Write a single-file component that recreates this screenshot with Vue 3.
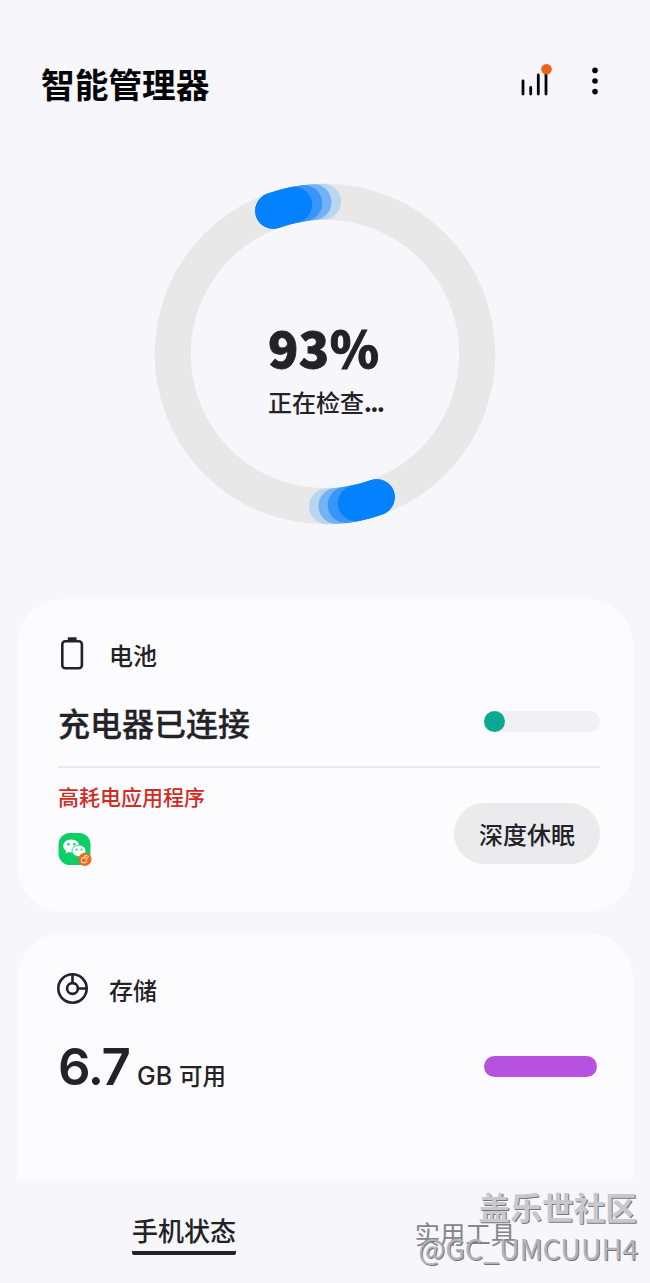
<script setup>
import { ref, computed } from 'vue';

const percent = ref(93);
const freeSpace = ref('6.7');
const activeTab = ref('status');

const tabs = [
  { id: 'status', label: '手机状态' },
  { id: 'tools', label: '实用工具' },
];

const RADIUS = 152.3;
const CENTER = 171;

// 12시 방향 기준 각도를 좌표로 변환
const pointAt = (deg) => {
  const rad = (deg * Math.PI) / 180;
  return `${(CENTER + RADIUS * Math.sin(rad)).toFixed(2)} ${(CENTER - RADIUS * Math.cos(rad)).toFixed(2)}`;
};

// 진행 표시 꼬리 (바깥쪽이 가장 옅음)
const trails = computed(() => [
  { end: -0.75, color: '#b9d6f1' },
  { end: -4.3, color: '#74b2f6' },
  { end: -7.8, color: '#3896fb' },
  { end: -11.7, color: '#0381fe' },
].map((t) => ({
  color: t.color,
  d: `M${pointAt(-19.9)} A${RADIUS} ${RADIUS} 0 0 1 ${pointAt(t.end)}`,
})));
</script>

<template>
  <div class="screen">
    <header class="header">
      <h1>智能管理器</h1>
      <div class="actions">
        <svg class="signal" width="34" height="36" viewBox="0 0 34 36">
          <g stroke="#050507" stroke-width="2.8" stroke-linecap="round">
            <path d="M4 18v13M11.700 24.500v6.500M19.300 12v19M27 10v21" />
          </g>
          <circle cx="27.500" cy="6.200" r="5.300" fill="#ec6419" />
        </svg>
        <svg class="more" width="10" height="30" viewBox="0 0 10 30" fill="#050507">
          <circle cx="5" cy="4.400" r="2.800" />
          <circle cx="5" cy="15" r="2.800" />
          <circle cx="5" cy="25.600" r="2.800" />
        </svg>
      </div>
    </header>

    <!-- 검사 진행 링 -->
    <section class="ring">
      <svg class="ring-svg" width="342" height="342" viewBox="0 0 342 342" fill="none">
        <circle cx="171" cy="171" :r="RADIUS" stroke="#e8e8e8" stroke-width="36" />
        <g stroke-width="36" stroke-linecap="round">
          <path v-for="t in trails" :key="t.color" :d="t.d" :stroke="t.color" />
        </g>
        <g stroke-width="36" stroke-linecap="round" transform="rotate(180 171 171)">
          <path v-for="t in trails" :key="t.color" :d="t.d" :stroke="t.color" />
        </g>
      </svg>
      <div class="ring-text">
        <div class="percent">{{ percent }}%</div>
        <div class="state">正在检查<span class="dots">...</span></div>
      </div>
    </section>

    <!-- 배터리 -->
    <section class="card battery">
      <div class="card-title">
        <svg width="32" height="36" viewBox="0 0 32 36">
          <rect x="5.300" y="5.300" width="19.600" height="27" rx="3" fill="none" stroke="#222227" stroke-width="2.600" />
          <path d="M10.800 1.300h8.800v4h-8.800z" fill="#222227" />
        </svg>
        <span>电池</span>
      </div>
      <div class="row main-row">
        <span class="charge">充电器已连接</span>
        <div class="bar"><div class="bar-dot"></div></div>
      </div>
      <div class="divider"></div>
      <div class="row app-row">
        <div>
          <div class="warn">高耗电应用程序</div>
          <svg class="wechat" width="36" height="36" viewBox="0 0 36 36">
            <rect x=".5" y="1" width="32" height="32" rx="11.500" fill="#0ccf66" />
            <path d="M13.300 7.400c-4.500 0-8 2.800-8 6.500 0 2.100 1.100 3.900 2.900 5.100l-.7 2.500 2.900-1.400c.9.300 1.900.4 2.900.4 4.500 0 8-2.900 8-6.600s-3.500-6.500-8-6.500z" fill="#fff" />
            <circle cx="10.500" cy="12.200" r="1.200" fill="#0ccf66" />
            <circle cx="16.200" cy="12.200" r="1.200" fill="#0ccf66" />
            <path d="M21 13.200c-3.900 0-7 2.500-7 5.700s3.100 5.700 7 5.700c.8 0 1.600-.1 2.300-.3l2.500 1.200-.6-2c1.700-1.100 2.700-2.700 2.700-4.600 0-3.200-3-5.700-6.900-5.700z" fill="#fff" stroke="#0ccf66" stroke-width=".8" />
            <circle cx="18.500" cy="17.400" r="1" fill="#0ccf66" />
            <circle cx="23.500" cy="17.400" r="1" fill="#0ccf66" />
            <circle cx="26.900" cy="27.300" r="6.600" fill="#ec6b1c" />
            <g fill="none" stroke="#ffd2a5" stroke-width="1.200" stroke-linecap="round">
              <circle cx="26" cy="28.300" r="2.700" />
              <path d="M26.200 24.400l2.700-1M29.200 26.300l1.200-2" />
            </g>
          </svg>
        </div>
        <button class="sleep">深度休眠</button>
      </div>
    </section>

    <!-- 저장공간 -->
    <section class="card storage">
      <div class="card-title">
        <svg width="32" height="36" viewBox="0 0 32 36" fill="none" stroke="#222227" stroke-width="2.600">
          <circle cx="15.500" cy="17.500" r="14.200" />
          <circle cx="15.500" cy="17.500" r="5.400" />
          <path d="M15.500 3.500v8.600M20.900 17.500h8.600" />
        </svg>
        <span>存储</span>
      </div>
      <div class="row space-row">
        <div class="space">
          <span class="num">{{ freeSpace }}</span>
          <span class="gb">GB</span>
          <span class="avail">可用</span>
        </div>
        <div class="bar purple"></div>
      </div>
    </section>

    <nav class="tabs">
      <div
        v-for="tab in tabs"
        :key="tab.id"
        class="tab"
        :class="{ active: tab.id === activeTab }"
        @click="activeTab = tab.id"
      >
        <span>{{ tab.label }}</span>
      </div>
    </nav>

    <div class="watermark">
      <div class="wm-name">盖乐世社区</div>
      <div class="wm-user">@GC_UMCUUH4</div>
    </div>
  </div>
</template>

<style>
body {
  margin: 0;
  background: #f6f6fb;
}
</style>

<style scoped>
.screen {
  position: relative;
  display: flex;
  flex-direction: column;
  width: 650px;
  height: 1283px;
  overflow: hidden;
  background: #f6f6fb;
  color: #222227;
  font-family: "Noto Sans CJK SC", sans-serif;
  font-weight: 500;
}

/* 상단 */
.header {
  display: flex;
  justify-content: space-between;
  height: 183px;
  box-sizing: border-box;
  padding: 61px 50px 0 41px;
}

h1 {
  margin: 0;
  color: #050507;
  font-size: 33.7px;
  line-height: 46px;
  font-weight: 700;
}

.actions {
  display: flex;
  gap: 37px;
}

.signal {
  margin-top: 2px;
}

.more {
  margin-top: 5px;
}

/* 진행 링 */
.ring {
  display: grid;
  justify-items: center;
  height: 416px;
}

.ring-svg,
.ring-text {
  grid-area: 1 / 1;
}

.ring-text {
  width: 114px;
  padding-top: 133px;
}

.percent {
  font-size: 50px;
  line-height: 60px;
  font-weight: 900;
  letter-spacing: 0.4px;
  white-space: nowrap;
  -webkit-text-stroke: 0.8px #222227;
}

.state {
  margin-top: 9px;
  font-size: 24px;
  line-height: 34px;
  white-space: nowrap;
}

.dots {
  font-weight: 900;
  letter-spacing: -1.2px;
  font-size: 22px;
}

/* 카드 */
.card {
  box-sizing: border-box;
  width: 616px;
  margin-left: 17px;
  padding: 0 33px 0 41px;
  border-radius: 46px;
  background: #fcfcff;
}

.battery {
  height: 313px;
  padding-top: 37px;
}

.storage {
  height: 248px;
  margin-top: 21px;
  padding-top: 38px;
  border-radius: 46px 46px 0 0;
}

.card-title {
  display: flex;
  align-items: center;
  gap: 20px;
  height: 36px;
  font-size: 24px;
  line-height: 36px;
}

.card-title svg {
  margin-left: -1px;
}

.card-title span {
  padding-top: 1px;
}

.row {
  display: flex;
  justify-content: space-between;
}

.main-row {
  align-items: center;
  height: 52px;
  margin-top: 24px;
}

.charge {
  font-size: 32px;
  line-height: 48px;
  -webkit-text-stroke: 0.3px #222227;
}

.bar {
  width: 116px;
  height: 21px;
  border-radius: 11px;
  background: #f1f1f5;
}

.main-row .bar {
  margin-top: -1px;
}

.bar-dot {
  width: 21px;
  height: 21px;
  border-radius: 50%;
  background: #0ba990;
}

.divider {
  height: 2px;
  margin-top: 18px;
  background: #e9e9ed;
}

.warn {
  margin-top: 12px;
  color: #cf2c23;
  font-size: 21px;
  line-height: 32px;
}

.wechat {
  display: block;
  margin-top: 20px;
}

.sleep {
  width: 146px;
  height: 61px;
  margin-top: 35px;
  padding: 0;
  border: none;
  border-radius: 31px;
  background: #ebebee;
  color: #222227;
  font: inherit;
  font-size: 24px;
}

.space-row {
  margin-top: 33px;
}

.space {
  display: flex;
  align-items: baseline;
  height: 60px;
  margin-top: -3px;
}

.num {
  width: 79px;
  font-family: Inter, sans-serif;
  font-size: 51px;
  line-height: 60px;
  font-weight: 600;
  letter-spacing: -1.3px;
}

.gb {
  width: 42px;
  font-family: Inter, sans-serif;
  font-size: 25px;
}

.avail {
  font-size: 23.5px;
}

.bar.purple {
  width: 113px;
  margin: 16px 3px 0 0;
  background: #b652df;
}

/* 하단 탭 */
.tabs {
  display: flex;
  justify-content: space-between;
  padding: 29px 134px 0 132px;
}

.tab {
  height: 45px;
  color: #85858a;
  font-size: 25.3px;
  line-height: 46px;
  font-weight: 400;
}

.tab.active {
  border-bottom: 4px solid #222227;
  border-radius: 2px;
  color: #222227;
  font-size: 26px;
  line-height: 40px;
  height: 41px;
  font-weight: 500;
}

/* 워터마크 */
.watermark {
  position: absolute;
  right: 12px;
  bottom: 15px;
  color: #c9c9cd;
  text-align: right;
  white-space: nowrap;
  text-shadow: 1px 1px 0 #77777b;
}

.wm-name {
  margin-right: 1px;
  font-size: 31.7px;
  line-height: 42px;
  font-weight: 700;
}

.wm-user {
  color: #b4b4b8;
  font-size: 28.5px;
  line-height: 41px;
  font-weight: 400;
}
</style>
